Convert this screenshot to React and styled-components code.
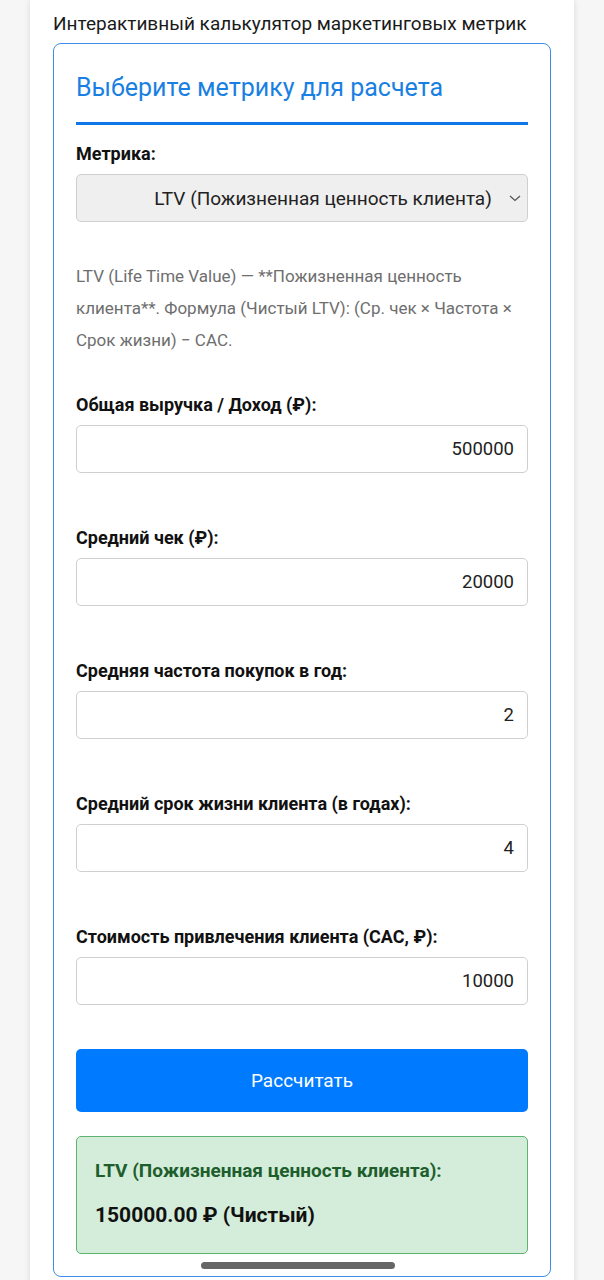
import React from "react";
import styled, { createGlobalStyle } from "styled-components";

const Global = createGlobalStyle`
  html, body { margin: 0; padding: 0; }
  body {
    background: #f6f6f6;
    font-family: Roboto, "Noto Sans", "Liberation Sans", sans-serif;
    color: #222;
  }
  * { box-sizing: border-box; }
`;

const Column = styled.div`
  margin: 0 30px;
  background: #fff;
  box-shadow: 0 0 6px rgba(0, 0, 0, 0.12);
  padding: 10px 23px 40px;
  min-height: 1320px;
`;

const PageTitle = styled.h1`
  margin: 0 0 5px;
  font-size: 19px;
  line-height: 28px;
  font-weight: 400;
  color: #1a1a1a;
`;

const Card = styled.div`
  border: 1px solid #3a8ee8;
  border-radius: 8px;
  padding: 29px 22px 22px;
  display: flex;
  flex-direction: column;
`;

const Heading = styled.h2`
  margin: 0;
  font-size: 25px;
  line-height: 30px;
  font-weight: 400;
  color: #1a7fe2;
  padding-bottom: 19px;
  border-bottom: 3px solid #0f78e6;
`;

const Label = styled.label`
  display: block;
  font-size: 18px;
  line-height: 24px;
  font-weight: 700;
  color: #111;
  margin-top: ${(p) => p.$top}px;
  margin-bottom: 8px;
`;

const SelectWrap = styled.div`
  position: relative;
`;

const Select = styled.select`
  appearance: none;
  -webkit-appearance: none;
  width: 100%;
  height: 48px;
  background: #efefef;
  border: 1px solid #cfcfcf;
  border-radius: 5px;
  font-family: inherit;
  font-size: 19px;
  color: #222;
  text-align: center;
  text-align-last: center;
  padding: 0 10px 0 52px;
`;

const Chevron = styled.svg`
  position: absolute;
  right: 6px;
  top: 19px;
  pointer-events: none;
`;

const Description = styled.p`
  margin: 38px 0 0;
  font-size: 17px;
  line-height: 32px;
  color: #6e6e6e;
`;

const Input = styled.input`
  width: 100%;
  height: 48px;
  border: 1px solid #cfcfcf;
  border-radius: 5px;
  font-family: inherit;
  font-size: 18.5px;
  color: #222;
  text-align: right;
  padding: 0 13px;
  background: #fff;
`;

const Button = styled.button`
  margin-top: 44px;
  height: 63px;
  width: 100%;
  border: none;
  border-radius: 5px;
  background: #007bff;
  color: #fff;
  font-family: inherit;
  font-size: 19px;
`;

const Result = styled.div`
  margin-top: 24px;
  background: #d4ecda;
  border: 1px solid #5cb46f;
  border-radius: 5px;
  padding: 22px 18px 24px;
`;

const ResultTitle = styled.div`
  font-size: 19px;
  line-height: 24px;
  font-weight: 700;
  color: #1d5e2c;
`;

const ResultValue = styled.div`
  margin-top: 18px;
  font-size: 21px;
  line-height: 28px;
  font-weight: 700;
  color: #111;
`;

const NavPill = styled.div`
  position: fixed;
  left: 201px;
  top: 1262px;
  width: 194px;
  height: 7px;
  border-radius: 4px;
  background: #666;
`;

const fields = [
  { label: "Общая выручка / Доход (₽):", value: "500000" },
  { label: "Средний чек (₽):", value: "20000" },
  { label: "Средняя частота покупок в год:", value: "2" },
  { label: "Средний срок жизни клиента (в годах):", value: "4" },
  { label: "Стоимость привлечения клиента (CAC, ₽):", value: "10000" },
];

export default function App() {
  return (
    <>
      <Global />
      <Column>
        <PageTitle>Интерактивный калькулятор маркетинговых метрик</PageTitle>
        <Card>
          <Heading>Выберите метрику для расчета</Heading>
          <Label $top={17}>Метрика:</Label>
          <SelectWrap>
            <Select defaultValue="ltv">
              <option value="ltv">LTV (Пожизненная ценность клиента)</option>
            </Select>
            <Chevron width="14" height="10" viewBox="0 0 14 10">
              <path d="M2 3 L7 7.5 L12 3" fill="none" stroke="#555" strokeWidth="1.3" />
            </Chevron>
          </SelectWrap>
          <Description>
            LTV (Life Time Value) — **Пожизненная ценность клиента**. Формула (Чистый LTV): (Ср. чек × Частота × Срок жизни) − CAC.
          </Description>
          {fields.map((f, i) => (
            <div key={f.label}>
              <Label $top={i === 0 ? 37 : 53}>{f.label}</Label>
              <Input type="text" defaultValue={f.value} />
            </div>
          ))}
          <Button>Рассчитать</Button>
          <Result>
            <ResultTitle>LTV (Пожизненная ценность клиента):</ResultTitle>
            <ResultValue>150000.00 ₽ (Чистый)</ResultValue>
          </Result>
        </Card>
      </Column>
      <NavPill />
    </>
  );
}
